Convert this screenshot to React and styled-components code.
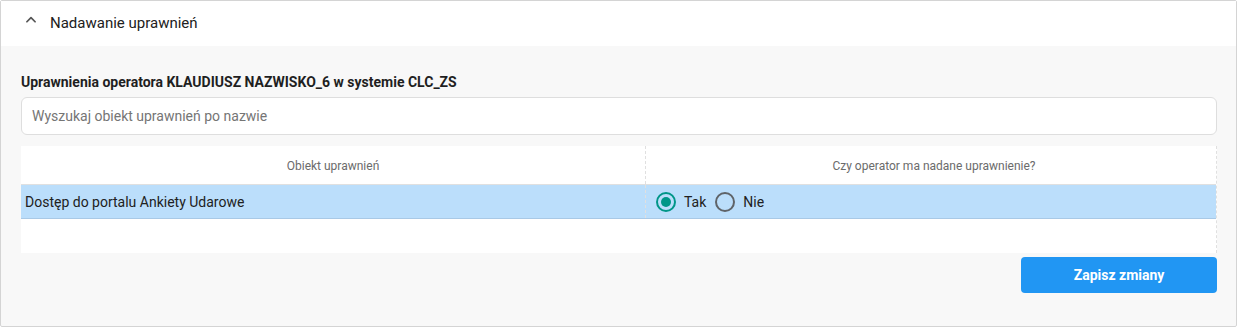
import React, { useState } from "react";
import styled, { createGlobalStyle } from "styled-components";

const GlobalStyle = createGlobalStyle`
  html, body {
    margin: 0;
    padding: 0;
    background: #ffffff;
    font-family: Roboto, "Liberation Sans", Arial, sans-serif;
  }
  * {
    box-sizing: border-box;
  }
`;

const Panel = styled.section`
  width: 1237px;
  height: 327px;
  border: 1px solid #d4d4d4;
  border-radius: 2px;
  background: #f8f8f8;
  display: flex;
  flex-direction: column;
`;

const PanelHeader = styled.header`
  height: 45px;
  background: #ffffff;
  display: flex;
  align-items: center;
  padding: 0 0 1px 23px;
  gap: 12px;
  font-size: 15px;
  color: #212121;
  cursor: pointer;
`;

const Chevron = styled.svg`
  width: 14px;
  height: 14px;
  color: #555;
  margin-top: -6px;
`;

const PanelBody = styled.div`
  flex: 1;
  padding: 28px 19px 0 20px;
  display: flex;
  flex-direction: column;
`;

const Title = styled.h3`
  margin: 0 0 6px;
  font-size: 14px;
  font-weight: 700;
  color: #1f1f1f;
  line-height: 17px;
`;

const SearchInput = styled.input`
  height: 38px;
  width: 100%;
  border: 1px solid #dedede;
  border-radius: 6px;
  background: #fff;
  padding: 0 10px;
  font-family: inherit;
  font-size: 14px;
  color: #333;
  outline: none;

  &::placeholder {
    color: #757575;
  }
`;

const Table = styled.div`
  margin-top: 11px;
  background: #fff;
  height: 107px;
  display: flex;
  flex-direction: column;
  border-right: 1px dashed #e0e0e0;
`;

const Row = styled.div`
  display: grid;
  grid-template-columns: 624px 1fr;
  height: ${(p) => (p.$head ? "39px" : "34px")};
  background: ${(p) => (p.$selected ? "#bbdefb" : "#fff")};
  border-bottom: 1px solid ${(p) => (p.$head ? "#e0e0e0" : "#a9c9e6")};
`;

const Cell = styled.div`
  display: flex;
  align-items: center;
  justify-content: ${(p) => (p.$center ? "center" : "flex-start")};
  padding: 0 4px;
  font-size: ${(p) => (p.$head ? "12px" : "14px")};
  color: ${(p) => (p.$head ? "#6b6b6b" : "#212121")};
  padding-top: ${(p) => (p.$head ? "1px" : "0")};
  & + & {
    border-left: 1px dashed #e0e0e0;
    padding-left: ${(p) => (p.$head ? "4px" : "10px")};
  }
`;

const RadioLabel = styled.label`
  display: flex;
  align-items: center;
  gap: 8px;
  margin-right: 9px;
  cursor: pointer;
  font-size: 14px;
  color: #212121;
`;

const RadioCircle = styled.span`
  width: 20px;
  height: 20px;
  border-radius: 50%;
  border: 2px solid ${(p) => (p.$checked ? "#009688" : "#5f6368")};
  display: flex;
  align-items: center;
  justify-content: center;

  &::after {
    content: "";
    width: 10px;
    height: 10px;
    border-radius: 50%;
    background: #009688;
    display: ${(p) => (p.$checked ? "block" : "none")};
  }
`;

const Footer = styled.div`
  display: flex;
  justify-content: flex-end;
  padding-top: 4px;
`;

const SaveButton = styled.button`
  width: 196px;
  height: 36px;
  border: none;
  border-radius: 4px;
  background: #2196f3;
  color: #fff;
  font-family: inherit;
  font-size: 14px;
  font-weight: 700;
  cursor: pointer;
`;

const Radio = ({ checked, label, onClick }) => (
  <RadioLabel onClick={onClick}>
    <RadioCircle $checked={checked} />
    {label}
  </RadioLabel>
);

const App = () => {
  const [granted, setGranted] = useState(true);

  return (
    <>
      <GlobalStyle />
      <Panel>
        <PanelHeader>
          <Chevron viewBox="0 0 24 24" fill="none" stroke="currentColor" strokeWidth="3" strokeLinecap="round" strokeLinejoin="round">
            <polyline points="5 15 12 8 19 15" />
          </Chevron>
          Nadawanie uprawnień
        </PanelHeader>
        <PanelBody>
          <Title>Uprawnienia operatora KLAUDIUSZ NAZWISKO_6 w systemie CLC_ZS</Title>
          <SearchInput placeholder="Wyszukaj obiekt uprawnień po nazwie" />
          <Table>
            <Row $head>
              <Cell $head $center>Obiekt uprawnień</Cell>
              <Cell $head $center>Czy operator ma nadane uprawnienie?</Cell>
            </Row>
            <Row $selected>
              <Cell>Dostęp do portalu Ankiety Udarowe</Cell>
              <Cell>
                <Radio checked={granted} label="Tak" onClick={() => setGranted(true)} />
                <Radio checked={!granted} label="Nie" onClick={() => setGranted(false)} />
              </Cell>
            </Row>
          </Table>
          <Footer>
            <SaveButton>Zapisz zmiany</SaveButton>
          </Footer>
        </PanelBody>
      </Panel>
    </>
  );
};

export default App;
